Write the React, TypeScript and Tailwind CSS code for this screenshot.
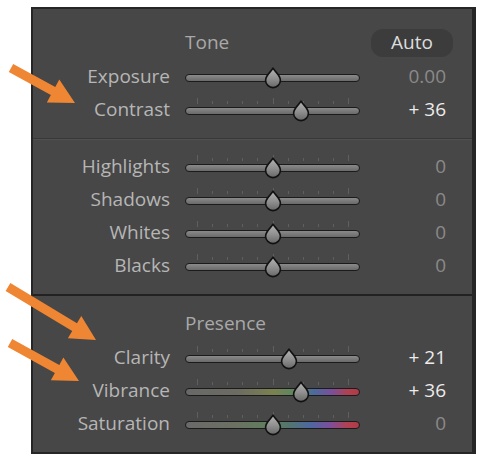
import React from 'react';

type Row = {
  label: string;
  value: number;
  text: string;
  bright?: boolean;
  ticks?: boolean;
  spectrum?: 'vibrance' | 'saturation';
};

const tone: Row[] = [
  { label: 'Exposure', value: 0, text: '0.00' },
  { label: 'Contrast', value: 36, text: '+ 36', bright: true, ticks: true },
];

const regions: Row[] = [
  { label: 'Highlights', value: 0, text: '0', ticks: true },
  { label: 'Shadows', value: 0, text: '0', ticks: true },
  { label: 'Whites', value: 0, text: '0', ticks: true },
  { label: 'Blacks', value: 0, text: '0', ticks: true },
];

const presence: Row[] = [
  { label: 'Clarity', value: 21, text: '+ 21', bright: true, ticks: true },
  { label: 'Vibrance', value: 36, text: '+ 36', bright: true, ticks: true, spectrum: 'vibrance' },
  { label: 'Saturation', value: 0, text: '0', ticks: true, spectrum: 'saturation' },
];

const TRACK_W = 175;
const INSET = 8;

function Thumb({ left }: { left: number }) {
  return (
    <svg
      width="18"
      height="22"
      viewBox="0 0 18 22"
      className="absolute top-[7px]"
      style={{ left: left - 9 }}
    >
      <defs>
        <linearGradient id="thumbFill" x1="0" y1="0" x2="0" y2="1">
          <stop offset="0" stopColor="#b4b4b4" />
          <stop offset="0.55" stopColor="#8e8e8e" />
          <stop offset="1" stopColor="#676767" />
        </linearGradient>
      </defs>
      <path
        d="M9 1.2 C11 5 16.4 8 16.4 13.2 A7.4 7.4 0 0 1 1.6 13.2 C1.6 8 7 5 9 1.2 Z"
        fill="url(#thumbFill)"
        stroke="#111"
        strokeWidth="1.6"
        strokeLinejoin="round"
      />
    </svg>
  );
}

function Slider({ row }: { row: Row }) {
  const pos = INSET + ((row.value + 100) / 200) * (TRACK_W - INSET * 2);
  const ticks = Array.from({ length: 11 }, (_, i) => i);

  const fill =
    row.spectrum === 'vibrance'
      ? 'bg-[linear-gradient(to_right,#686868_0%,#6c6c62_30%,#7c8150_50%,#5f8760_62%,#4c6a9c_74%,#7a4f9c_84%,#b2404e_94%,#b03a48_100%)]'
      : row.spectrum === 'saturation'
        ? 'bg-[linear-gradient(to_right,#6a6a6a_0%,#6c7062_28%,#5f7e5e_48%,#55766a_58%,#4d68a0_72%,#7c4e9e_83%,#b3404f_94%,#ad3b48_100%)]'
        : 'bg-[linear-gradient(to_bottom,#8a8a8a,#6a6a6a)]';

  return (
    <div className="relative ml-[15px] flex h-[33px] w-[175px] items-center pt-[2px]">
      {row.ticks &&
        ticks.map((i) => (
          <span
            key={i}
            className={`absolute w-px bg-[#5f5f5f] ${i % 5 === 0 ? 'top-[5px] h-[6px]' : 'top-[8px] h-[3px]'}`}
            style={{ left: 12 + i * 15.1 }}
          />
        ))}
      <div className={`h-[8px] w-full rounded-full border-[1.5px] border-[#1b1b1b] ${fill}`} />
      <Thumb left={pos} />
    </div>
  );
}

function SliderRow({ row }: { row: Row }) {
  return (
    <div className="flex h-[33px] items-center">
      <div className="w-[137px] text-right text-[#b6b6b6]">{row.label}</div>
      <Slider row={row} />
      <div className={`w-[86px] text-right ${row.bright ? 'text-[#ececec]' : 'text-[#8a8a8a]'}`}>
        {row.text}
      </div>
    </div>
  );
}

function Arrow({ x, y, tx, ty }: { x: number; y: number; tx: number; ty: number }) {
  const dx = tx - x;
  const dy = ty - y;
  const len = Math.sqrt(dx * dx + dy * dy);
  const angle = (Math.atan2(dy, dx) * 180) / Math.PI;
  const head = 25;
  const s = 4.6;
  const h = 13;
  const b = len - head;
  return (
    <polygon
      points={`0,${-s} ${b},${-s} ${b},${-h} ${len},0 ${b},${h} ${b},${s} 0,${s}`}
      fill="#ef8633"
      transform={`translate(${x} ${y}) rotate(${angle})`}
    />
  );
}

export default function App() {
  return (
    <div className="relative min-h-[463px] w-[486px] bg-white pl-[31px] pt-[7px] font-['Open_Sans',sans-serif] text-[19px] leading-none">
      <div className="flex w-[445px] flex-col border-2 border-r-4 border-[#262626] bg-[#474747]">
        {/* Tone */}
        <div className="pt-[16px] pb-[12px]">
          <div className="flex h-[35px] items-center">
            <div className="ml-[152px] w-[170px] text-[#a9a9a9]">Tone</div>
            <div className="ml-[16px] flex h-[28px] w-[82px] items-center justify-center rounded-[12px] bg-[#3c3c3c] text-[#dcdcdc]">
              Auto
            </div>
          </div>
          {tone.map((r) => (
            <SliderRow key={r.label} row={r} />
          ))}
        </div>

        <div className="h-px bg-[#383838]" />
        <div className="h-px bg-[#505050]" />

        {/* Regions */}
        <div className="pt-[10px] pb-[12px]">
          {regions.map((r) => (
            <SliderRow key={r.label} row={r} />
          ))}
        </div>

        <div className="h-[2px] bg-[#222222]" />

        {/* Presence */}
        <div className="pt-[10px] pb-[12px]">
          <div className="flex h-[35px] items-center">
            <div className="ml-[152px] text-[#a9a9a9]">Presence</div>
          </div>
          {presence.map((r) => (
            <SliderRow key={r.label} row={r} />
          ))}
        </div>
      </div>

      {/* callout arrows */}
      <svg className="pointer-events-none absolute left-0 top-0" width="486" height="463">
        <Arrow x={11} y={68} tx={75} ty={103} />
        <Arrow x={8} y={287} tx={96} ty={340} />
        <Arrow x={10} y={343} tx={79} ty={381} />
      </svg>
    </div>
  );
}
